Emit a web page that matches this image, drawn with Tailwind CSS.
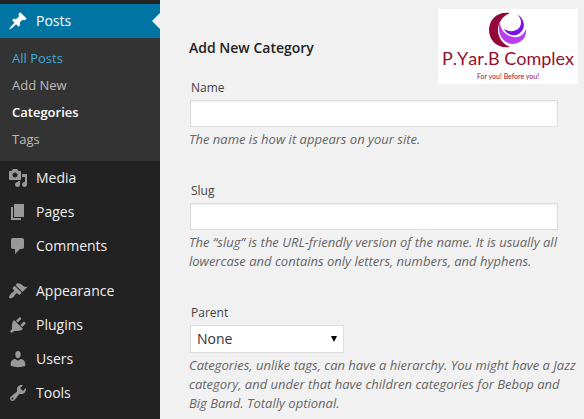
<!DOCTYPE html>
<html lang="en">
<head>
    <meta charset="UTF-8">
    <meta name="viewport" content="width=device-width, initial-scale=1.0">
    <title>Categories</title>
    <script src="https://cdn.jsdelivr.net/npm/@tailwindcss/browser@4"></script>
</head>
<body class="min-h-screen flex bg-[#f1f1f1] font-['Open_Sans',sans-serif] text-[#444]">
    <!-- Admin menu -->
    <nav class="w-40 shrink-0 bg-[#222] pt-1 pb-2 text-sm text-[#eee]">
        <a href="#" class="relative flex items-center gap-2 h-[34px] px-2 bg-[#0074a2] text-white">
            <svg class="size-5" viewBox="0 0 20 20" fill="currentColor"><path d="M10.44 3.02l1.82-1.82 6.36 6.35-1.83 1.82c-1.05-.68-2.48-.57-3.41.36l-.75.75c-.92.93-1.04 2.35-.35 3.41l-1.83 1.82-2.41-2.41-2.8 2.79c-.42.42-3.38 2.71-3.8 2.29s1.86-3.39 2.28-3.81l2.79-2.79L4.1 9.36l1.83-1.82c1.05.69 2.48.57 3.4-.36l.75-.75c.93-.92 1.05-2.35.36-3.41z"/></svg>
            Posts
            <span class="absolute right-0 top-[9px] border-y-8 border-r-8 border-y-transparent border-r-[#f1f1f1]"></span>
        </a>
        <ul class="bg-[#333] pt-[7px] pb-2 px-3 text-[13px] leading-[27px] text-[#bbb]">
            <li><a href="#" class="block text-[#42aad8]">All Posts</a></li>
            <li><a href="#" class="block">Add New</a></li>
            <li><a href="#" class="block font-semibold text-white">Categories</a></li>
            <li><a href="#" class="block">Tags</a></li>
        </ul>
        <a href="#" class="flex items-center gap-2 h-[34px] px-2">
            <svg class="size-5 text-[#999]" viewBox="0 0 20 20" fill="currentColor"><path d="M13 11V4c0-.55-.45-1-1-1h-1.67L9 1H5L3.67 3H2c-.55 0-1 .45-1 1v7c0 .55.45 1 1 1h10c.55 0 1-.45 1-1zM7 4.5c1.38 0 2.5 1.12 2.5 2.5S8.38 9.5 7 9.5 4.5 8.38 4.5 7 5.62 4.5 7 4.5zM14 6h5v10.5c0 1.38-1.12 2.5-2.5 2.5S14 17.88 14 16.5s1.12-2.5 2.5-2.5c.17 0 .34.02.5.05V9h-3V6zm-4 8.05V13h2v3.5c0 1.38-1.12 2.5-2.5 2.5S7 17.88 7 16.5 8.12 14 9.5 14c.17 0 .34.02.5.05z"/></svg>
            Media
        </a>
        <a href="#" class="flex items-center gap-2 h-[34px] px-2">
            <svg class="size-5 text-[#999]" viewBox="0 0 20 20" fill="currentColor"><path d="M6 15V2h10v13H6zm-1 1h8v2H3V5h2v11z"/></svg>
            Pages
        </a>
        <a href="#" class="flex items-center gap-2 h-[34px] px-2">
            <svg class="size-5 text-[#999]" viewBox="0 0 20 20" fill="currentColor"><path d="M5 2h9c1.1 0 2 .9 2 2v7c0 1.1-.9 2-2 2h-2l-5 5v-5H5c-1.1 0-2-.9-2-2V4c0-1.1.9-2 2-2z"/></svg>
            Comments
        </a>
        <a href="#" class="flex items-center gap-2 h-[34px] px-2 mt-[11px]">
            <svg class="size-5 text-[#999]" viewBox="0 0 20 20" fill="currentColor"><path d="M14.48 11.06L7.41 3.99l1.5-1.5c.5-.56 2.3-.47 3.51.32 1.21.8 1.43 1.28 2.91 2.1 1.18.64 2.45 1.26 4.45.85zm-.71.71L6.7 4.7 4.93 6.47c-.39.39-.39 1.02 0 1.41l1.06 1.06c.39.39.39 1.03 0 1.42-.6.6-1.43 1.11-2.21 1.69-.35.26-.7.53-1.01.84C1.43 14.23.4 16.08 1.4 17.07c.99 1 2.84-.03 4.18-1.36.31-.31.58-.66.85-1.02.57-.78 1.08-1.61 1.69-2.21.39-.39 1.02-.39 1.41 0l1.06 1.06c.39.39 1.02.39 1.41 0z"/></svg>
            Appearance
        </a>
        <a href="#" class="flex items-center gap-2 h-[34px] px-2">
            <svg class="size-5 text-[#999]" viewBox="0 0 20 20" fill="currentColor"><path d="M13.11 4.36L9.87 7.6 8 5.73l3.24-3.24c.35-.34 1.05-.2 1.56.32.52.51.66 1.21.31 1.55zm-8 1.77l.91-1.12 9.01 9.01-1.19.84c-.71.71-2.63 1.16-3.82 1.16H6.14L4.9 17.26c-.59.59-1.54.59-2.12 0-.59-.58-.59-1.53 0-2.12l1.24-1.24v-3.88c0-1.13.4-3.19 1.09-3.89zm7.26 3.97l3.24-3.24c.34-.35 1.04-.21 1.55.31.52.51.66 1.21.31 1.55l-3.24 3.25z"/></svg>
            Plugins
        </a>
        <a href="#" class="flex items-center gap-2 h-[34px] px-2">
            <svg class="size-5 text-[#999]" viewBox="0 0 20 20" fill="currentColor"><path d="M10 9.25c-2.27 0-2.73-3.44-2.73-3.44C7 4.02 7.82 2 9.97 2c2.16 0 2.98 2.02 2.71 3.81 0 0-.41 3.44-2.68 3.44zm0 2.57L12.72 10c2.39 0 4.52 2.33 4.52 4.53v2.49s-3.65 1.13-7.24 1.13c-3.65 0-7.24-1.13-7.24-1.13v-2.49c0-2.25 1.94-4.48 4.47-4.48z"/></svg>
            Users
        </a>
        <a href="#" class="flex items-center gap-2 h-[34px] px-2">
            <svg class="size-5 text-[#999]" viewBox="0 0 20 20" fill="currentColor"><path d="M16.68 9.77c-1.34 1.34-3.3 1.67-4.95.99l-5.41 6.52c-.99.99-2.59.99-3.58 0s-.99-2.59 0-3.57l6.52-5.42c-.68-1.65-.35-3.61.99-4.95 1.28-1.28 3.12-1.62 4.72-1.06l-2.89 2.89 2.82 2.82 2.86-2.87c.53 1.58.18 3.39-1.08 4.65zM3.81 16.21c.4.39 1.04.39 1.43 0 .4-.4.4-1.04 0-1.43-.39-.4-1.03-.4-1.43 0-.39.39-.39 1.03 0 1.43z"/></svg>
            Tools
        </a>
    </nav>

    <main class="relative flex-1 pl-[29px] pr-2 pt-[38px]">
        <!-- Logo badge -->
        <div class="absolute top-[9px] right-[6px] w-[140px] h-[75px] bg-white text-[#93102f] text-center font-[Lato,sans-serif] whitespace-nowrap">
            <svg class="mx-auto mt-[3px] w-10 h-9" viewBox="0 0 40 36">
                <path fill="#93083a" d="M22 1C9 -1 1 8 1 18S9 37 22 35C15 32 10 26 10 18S15 4 22 1z"/>
                <path fill="#b93df0" d="M12 9C8 21 15 32 25 32C34 31 39 25 38 17C36 23 31 26 25 25C18 24 12 18 12 9z"/>
                <path fill="#7d10e8" d="M29 2C37 7 38 16 32 21C26 26 18 22 16 17C21 20 27 20 31 16C34 12 34 7 29 2z"/>
            </svg>
            <div class="text-[18px] leading-[21px] [font-kerning:none]">P.Yar.B Complex</div>
            <div class="text-[7px] leading-[14px]">For you! Before you!</div>
        </div>

        <h3 class="text-sm leading-5 font-semibold text-[#222]">Add New Category</h3>
        <form class="mt-[19px]">
            <div>
                <label for="name" class="block pl-0.5 text-xs leading-[22px]">Name</label>
                <input id="name" type="text" class="block ml-px mt-px w-[95%] h-[27px] px-1 bg-white border border-[#ddd] shadow-[inset_0_1px_2px_rgba(0,0,0,0.07)]">
                <p class="mt-[3px] text-[13px] leading-[19px] italic text-[#666]">The name is how it appears on your site.</p>
            </div>
            <div class="mt-[31px]">
                <label for="slug" class="block pl-0.5 text-xs leading-[22px]">Slug</label>
                <input id="slug" type="text" class="block ml-px mt-px w-[95%] h-[27px] px-1 bg-white border border-[#ddd] shadow-[inset_0_1px_2px_rgba(0,0,0,0.07)]">
                <p class="mt-[3px] text-[13px] leading-[19px] italic text-[#666]">The “slug” is the URL-friendly version of the name. It is usually all lowercase and contains only letters, numbers, and hyphens.</p>
            </div>
            <div class="mt-[31px]">
                <label for="parent" class="block pl-0.5 text-xs leading-[22px]">Parent</label>
                <div class="relative ml-px mt-px w-[154px]">
                    <select id="parent" class="block w-full h-7 pl-1.5 pr-5 appearance-none bg-white border border-[#ddd] text-sm leading-5 text-[#333]">
                        <option>None</option>
                    </select>
                    <svg class="absolute right-[7px] top-[11px] w-1.5 h-1.5 pointer-events-none" viewBox="0 0 6 6"><path d="M0 0h6L3 6z"/></svg>
                </div>
                <p class="mt-[3px] text-[13px] leading-[19px] italic text-[#666]">Categories, unlike tags, can have a hierarchy. You might have a Jazz category, and under that have children categories for Bebop and Big Band. Totally optional.</p>
            </div>
        </form>
    </main>
</body>
</html>
